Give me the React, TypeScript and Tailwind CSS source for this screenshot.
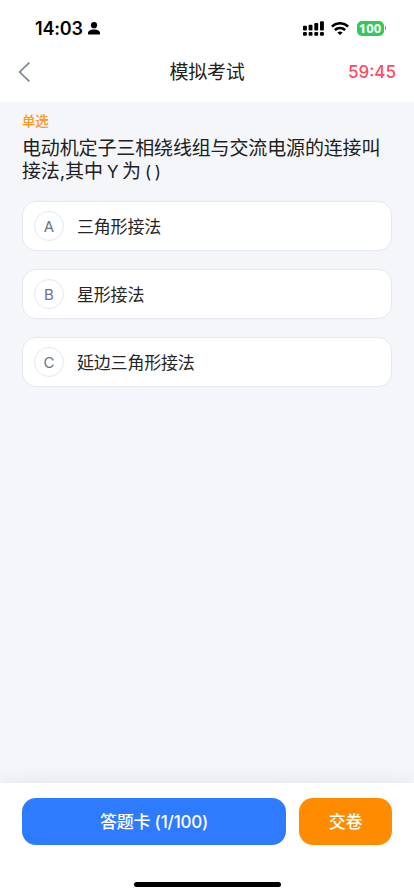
const options = [
  { key: 'A', text: '三角形接法' },
  { key: 'B', text: '星形接法' },
  { key: 'C', text: '延边三角形接法' },
]

function StatusBar() {
  return (
    <div className="flex h-[42px] items-center justify-between pt-[14px] pr-[28px] pl-[35px] text-black">
      <div className="flex items-center gap-[5px]">
        <span className="pt-px text-[18px] leading-none font-semibold tracking-[-0.2px]">14:03</span>
        <svg width="12" height="13" viewBox="0 0 12 13" fill="currentColor">
          <circle cx="6" cy="3.2" r="3.1" />
          <path d="M0 12V10.8C0 8.7 2.6 7.4 6 7.4s6 1.3 6 3.4V12q0 .6-.7.6H.7Q0 12.6 0 12Z" />
        </svg>
      </div>
      <div className="flex items-center">
        <svg width="21" height="15" viewBox="0 0 21 15" fill="currentColor">
          <rect x="0" y="4.7" width="3.9" height="4.7" rx="1" />
          <rect x="5.6" y="3.7" width="3.9" height="5.7" rx="1" />
          <rect x="11.3" y="2" width="3.9" height="7.4" rx="1" />
          <rect x="17" y="0.2" width="3.9" height="9.2" rx="1" />
          <rect x="0" y="10.9" width="3.9" height="3.8" rx="1" />
          <rect x="5.6" y="10.9" width="3.9" height="3.8" rx="1" />
          <rect x="11.3" y="10.9" width="3.9" height="3.8" rx="1" />
          <rect x="17" y="10.9" width="3.9" height="3.8" rx="1" />
        </svg>
        <svg className="ml-[7px]" width="18" height="13" viewBox="0 0 18 13" fill="none" stroke="currentColor" strokeWidth="2.6">
          <path d="M.9 4.5a11.8 11.8 0 0 1 16.2 0" />
          <path d="M3.9 8a7.4 7.4 0 0 1 10.2 0" />
          <path d="M9 13.2 6.4 10.6a3.8 3.8 0 0 1 5.2 0Z" fill="currentColor" stroke="none" />
        </svg>
        <div className="ml-[8px] flex h-[15px] w-[27px] items-center justify-center rounded-[5px] bg-[#34c759] font-['Open_Sans',sans-serif] text-[13px] leading-none font-bold text-white">
          100
        </div>
        <div className="ml-px h-[4px] w-[1.5px] rounded-r-full bg-[#34c759]" />
      </div>
    </div>
  )
}

function Header() {
  return (
    <header className="h-[102px] bg-white">
      <StatusBar />
      <div className="grid h-[60px] grid-cols-3 items-center pr-[18px] pl-[18px]">
        <svg width="13" height="20" viewBox="0 0 13 20" fill="none" stroke="#7b8496" strokeWidth="1.7">
          <path d="M11.3 .7 1.7 10l9.6 9.3" />
        </svg>
        <h1 className="pt-px text-center text-[19px] leading-none font-normal tracking-[-0.2px] whitespace-nowrap text-[#202020]">
          模拟考试
        </h1>
        <span className="text-right text-[17px] leading-none font-medium text-[#ff4a60]">59:45</span>
      </div>
    </header>
  )
}

function Option({ label, text }: { label: string; text: string }) {
  return (
    <button className="flex h-[50px] w-full items-center rounded-[14px] border border-[#e4e8f1] bg-white pl-[11px] text-left">
      <span className="flex h-[30px] w-[30px] items-center justify-center rounded-full border border-[#e4e8f1] text-[15px] leading-none text-[#6b7488]">
        {label}
      </span>
      <span className="ml-[13px] pt-[2px] text-[17px] leading-none tracking-[-0.2px] text-[#252525]">{text}</span>
    </button>
  )
}

export default function App() {
  return (
    <div className="flex h-[896px] w-[414px] flex-col overflow-hidden bg-[#f4f6fa] font-['Inter','Noto_Sans_CJK_SC',sans-serif]">
      <Header />
      <main className="flex-1 px-[22px] pt-[12px]">
        <div className="text-[13.5px] leading-[15px] font-medium tracking-[-0.2px] text-[#ff951d]">单选</div>
        <h2 className="mt-[9px] text-[19px] leading-[22.5px] font-normal tracking-[-0.14px] whitespace-nowrap text-[#202020]">
          电动机定子三相绕线组与交流电源的连接叫
          <br />
          接法,其中<span className="text-[17px] tracking-[-0.6px]"> Y </span>为
          <span className="text-[17px] tracking-[-0.7px]"> ( )</span>
        </h2>
        <div className="mt-[18px] flex flex-col gap-[18px]">
          {options.map((o) => (
            <Option key={o.key} label={o.key} text={o.text} />
          ))}
        </div>
      </main>
      <footer className="flex h-[113px] flex-col items-center justify-between bg-white px-[22px] pt-[15px] pb-[9px] shadow-[0_0_20px_rgba(0,0,0,0.08)]">
        <div className="flex w-full gap-[13px] text-[17px] font-medium tracking-[-0.2px] text-white">
          <button className="h-[47px] flex-1 rounded-[14px] bg-[#2e7bff] pt-[2px]">答题卡 (1/100)</button>
          <button className="h-[47px] w-[93px] rounded-[14px] bg-[#ff8c00] pt-[2px]">交卷</button>
        </div>
        <div className="h-[5px] w-[147px] rounded-full bg-black" />
      </footer>
    </div>
  )
}
